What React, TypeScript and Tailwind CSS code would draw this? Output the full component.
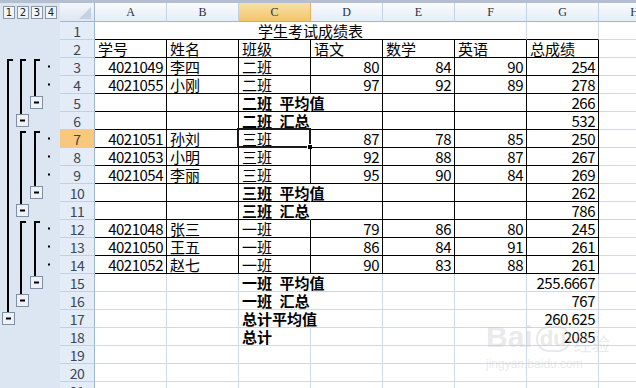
import React from "react";

type Kind = "title" | "head" | "data" | "sub" | "total" | "blank";
type Row = { n: number; kind: Kind; cells?: string[] };

const rows: Row[] = [
  { n: 1, kind: "title", cells: ["学生考试成绩表"] },
  { n: 2, kind: "head", cells: ["学号", "姓名", "班级", "语文", "数学", "英语", "总成绩"] },
  { n: 3, kind: "data", cells: ["4021049", "李四", "二班", "80", "84", "90", "254"] },
  { n: 4, kind: "data", cells: ["4021055", "小刚", "二班", "97", "92", "89", "278"] },
  { n: 5, kind: "sub", cells: ["", "", "二班\u2002平均值", "", "", "", "266"] },
  { n: 6, kind: "sub", cells: ["", "", "二班\u2002汇总", "", "", "", "532"] },
  { n: 7, kind: "data", cells: ["4021051", "孙刘", "三班", "87", "78", "85", "250"] },
  { n: 8, kind: "data", cells: ["4021053", "小明", "三班", "92", "88", "87", "267"] },
  { n: 9, kind: "data", cells: ["4021054", "李丽", "三班", "95", "90", "84", "269"] },
  { n: 10, kind: "sub", cells: ["", "", "三班\u2002平均值", "", "", "", "262"] },
  { n: 11, kind: "sub", cells: ["", "", "三班\u2002汇总", "", "", "", "786"] },
  { n: 12, kind: "data", cells: ["4021048", "张三", "一班", "79", "86", "80", "245"] },
  { n: 13, kind: "data", cells: ["4021050", "王五", "一班", "86", "84", "91", "261"] },
  { n: 14, kind: "data", cells: ["4021052", "赵七", "一班", "90", "83", "88", "261"] },
  { n: 15, kind: "total", cells: ["", "", "一班\u2002平均值", "", "", "", "255.6667"] },
  { n: 16, kind: "total", cells: ["", "", "一班\u2002汇总", "", "", "", "767"] },
  { n: 17, kind: "total", cells: ["", "", "总计平均值", "", "", "", "260.625"] },
  { n: 18, kind: "total", cells: ["", "", "总计", "", "", "", "2085"] },
  { n: 19, kind: "blank" },
  { n: 20, kind: "blank" },
  { n: 21, kind: "blank" },
];

const COLS = ["A", "B", "C", "D", "E", "F", "G", "H"];
const FONT = { fontFamily: '"Noto Sans CJK SC", "Noto Sans", sans-serif' };

// outline gutter, y relative to the top of row 1
const rowTop = (n: number) => (n - 1) * 18;
const rowMid = (n: number) => rowTop(n) + 8.5;

const groups: { x: number; from: number; btn: number }[] = [
  { x: 8, from: 3, btn: 17 },
  { x: 21, from: 3, btn: 6 },
  { x: 21, from: 7, btn: 11 },
  { x: 21, from: 12, btn: 16 },
  { x: 35, from: 3, btn: 5 },
  { x: 35, from: 7, btn: 10 },
  { x: 35, from: 12, btn: 15 },
];
const detailRows = [3, 4, 7, 8, 9, 12, 13, 14];

const Gutter = () => (
  <div className="w-[60px] shrink-0 bg-[#dce6f3] flex flex-col">
    <div className="h-[19px] flex items-center gap-[2px] pl-[3px]">
      {["1", "2", "3", "4"].map((l) => (
        <div
          key={l}
          className="w-[12px] h-[13px] border border-[#8797ad] bg-[#f1f5fa] flex items-center justify-center text-[10px] leading-none text-[#222]"
          style={{ fontFamily: '"DejaVu Sans", sans-serif' }}
        >
          {l}
        </div>
      ))}
    </div>
    <svg width="60" height="366" className="block">
      {groups.map((g, i) => {
        const top = rowTop(g.from) + 2;
        const end = rowMid(g.btn) - 6.5;
        return (
          <path
            key={i}
            d={`M${g.x + 5} ${top} H${g.x} V${end}`}
            fill="none"
            stroke="#000"
            strokeWidth="2"
          />
        );
      })}
      {groups.map((g, i) => {
        const bx = g.x === 8 ? 2.5 : g.x === 21 ? 16.5 : 30.5;
        const by = rowMid(g.btn) - 6;
        return (
          <g key={"b" + i}>
            <rect x={bx} y={by} width="12" height="12" fill="#eef2f8" stroke="#7f8fa5" />
            <rect x={bx + 3.5} y={by + 5} width="5" height="2" fill="#000" />
          </g>
        );
      })}
      {detailRows.map((r) => (
        <rect key={r} x="48" y={rowMid(r) - 1} width="2" height="2" fill="#000" />
      ))}
    </svg>
  </div>
);

const isNum = (s: string) => /^[\d.]+$/.test(s);

const Cell = ({
  text = "",
  cls,
  bold = false,
  selected = false,
}: {
  text?: string;
  cls: string;
  bold?: boolean;
  selected?: boolean;
}) => {
  const num = isNum(text);
  return (
    <div
      className={`relative flex items-end whitespace-nowrap px-[3px] border-r border-b text-[15px] leading-[17px] text-black ${
        num ? "justify-end tracking-[-0.5px]" : "justify-start"
      } ${bold ? "font-bold" : ""} ${cls}`}
    >
      {text && <span className="block h-[17px] leading-[17px]">{text}</span>}
      {selected && (
        <div className="absolute left-[-2px] top-[-2px] right-[-1px] bottom-[-1px] border-2 border-[#1a1a1a]">
          <div className="absolute right-[-4px] bottom-[-4px] w-[6px] h-[6px] bg-black border border-white" />
        </div>
      )}
    </div>
  );
};

const overflowRows = [5, 6, 10, 11, 15, 16, 17];

const SheetRow = ({ row }: { row: Row }) => {
  const n = row.n;
  const head = (
    <div
      className={`flex items-center justify-center border-r border-b border-r-[#9eb6ce] border-b-[#c3d0e2] text-[14px] leading-none text-[#3b4656] tracking-[-0.5px] ${
        n === 7 ? "bg-[#f8c97c]" : "bg-[#e4ecf7]"
      }`}
    >
      {n}
    </div>
  );

  if (row.kind === "title") {
    return (
      <>
        {head}
        <div className="col-span-6 flex items-end justify-center border-r border-b border-r-[#d0d7e5] border-b-black text-[15px] leading-[17px]">
          <span className="block h-[17px] leading-[17px]">{row.cells![0]}</span>
        </div>
        <Cell cls="border-r-[#d0d7e5] border-b-black" />
        <Cell cls="border-r-[#d0d7e5] border-b-[#d0d7e5]" />
      </>
    );
  }

  const cells = row.cells ?? [];
  const framed = n >= 2 && n <= 14;
  const boldLabel = row.kind === "sub" || row.kind === "total";

  return (
    <>
      {head}
      {COLS.map((c, i) => {
        let right = "border-r-[#d0d7e5]";
        let bottom = "border-b-[#d0d7e5]";
        if (i <= 6 && framed) {
          right = "border-r-black";
          bottom = "border-b-black";
        }
        if (i === 2 && overflowRows.includes(n)) right = "border-r-transparent";
        return (
          <Cell
            key={c}
            text={cells[i]}
            cls={`${right} ${bottom}`}
            bold={boldLabel && i === 2}
            selected={n === 7 && c === "C"}
          />
        );
      })}
    </>
  );
};

export default function App() {
  return (
    <div className="relative w-[636px] h-[388px] overflow-hidden bg-white" style={FONT}>
      <div className="h-[3px] bg-[#b3bfcf]" />
      <div className="flex">
        <Gutter />
        <div className="grid grid-cols-[35px_repeat(8,72px)] grid-rows-[19px] auto-rows-[18px] shrink-0">
          <div className="relative border-r border-b border-r-[#9eb6ce] border-b-[#9eb6ce] bg-linear-to-b from-[#f3f6fb] to-[#dfe7f2]">
            <svg width="34" height="18" className="absolute inset-0">
              <path d="M31 4 L31 16 L19 16 Z" fill="#c4d1e2" />
            </svg>
          </div>
          {COLS.map((c) => (
            <div
              key={c}
              className={`flex items-center justify-center border-r border-b border-b-[#9eb6ce] text-[12px] leading-none text-[#27313f] ${
                c === "C"
                  ? "bg-linear-to-b from-[#fadfa6] to-[#f2c56a] border-r-[#e0b466]"
                  : "bg-linear-to-b from-[#f9fbfd] to-[#e6edf6] border-r-[#c5d1df]"
              }`}
              style={{ fontFamily: '"Liberation Serif", serif' }}
            >
              {c}
            </div>
          ))}
          {rows.map((r) => (
            <SheetRow key={r.n} row={r} />
          ))}
        </div>
      </div>

      {/* watermark */}
      <div className="absolute left-[486px] top-[322px] pointer-events-none select-none text-[rgba(200,200,200,0.4)]">
        <div className="flex items-end gap-[3px]" style={{ fontFamily: '"Liberation Sans", sans-serif' }}>
          <span className="text-[30px] font-bold leading-none">Bai</span>
          <span className="text-[22px] font-bold leading-none rounded-full border-2 border-[rgba(200,200,200,0.4)] px-[2px]">du</span>
          <span className="text-[18px] leading-none" style={FONT}>经验</span>
        </div>
        <div className="text-[12px] mt-[6px] leading-none" style={{ fontFamily: '"Liberation Sans", sans-serif' }}>
          jingyan.baidu.com
        </div>
      </div>
    </div>
  );
}
